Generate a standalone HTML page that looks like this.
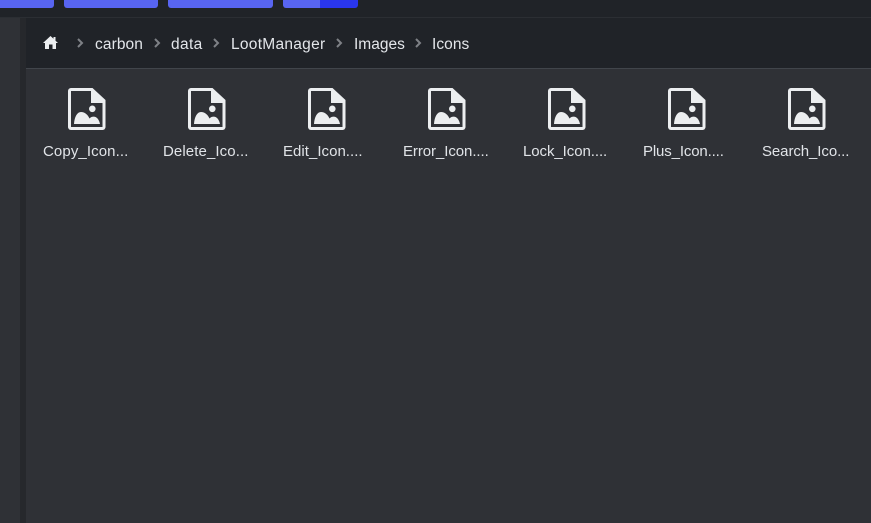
<!DOCTYPE html>
<html>
<head>
<meta charset="utf-8">
<style>
html,body{margin:0;padding:0;background:#2f3136;}
#root{position:relative;width:871px;height:523px;overflow:hidden;background:#2f3136;font-family:"Liberation Sans",sans-serif;color:#e3e6ea;}
.a{position:absolute;}
.btn{position:absolute;top:-6px;height:14px;background:#5865f2;border-radius:3px;}
.t{position:absolute;font-size:15.5px;line-height:20px;white-space:nowrap;top:35px;}
.c{position:absolute;top:38px;}
.ic{position:absolute;top:88px;}
.l{position:absolute;top:142px;font-size:15px;line-height:20px;white-space:nowrap;color:#e1e4e8;}
</style>
</head>
<body>
<div id="root">
<svg width="0" height="0" style="position:absolute">
<defs>
<symbol id="f" viewBox="0 0 38 42">
<path d="M3 0H24.500L37.500 12V39a3 3 0 0 1-3 3H3a3 3 0 0 1-3-3V3a3 3 0 0 1 3-3Z" fill="#eceef0"/>
<path d="M3 3H23V15H34.500V39H3Z" fill="#2f3136"/>
<path d="M6 36C6.500 29 9 24 13 24C17 24 20 27 21.500 30.500C23 29 24.500 28.500 26.500 28.700C29.500 29 31.500 33 32 36Z" fill="#eceef0"/>
<circle cx="24.300" cy="20.800" r="3.300" fill="#eceef0"/>
</symbol>
<symbol id="ch" viewBox="0 0 8 10">
<path d="M2 1L6 5L2 9" fill="none" stroke="#7e8186" stroke-width="2"/>
</symbol>
</defs>
</svg>

<div class="a" style="left:0;top:0;width:871px;height:17px;background:#202328;"></div>
<div class="a" style="left:0;top:17px;width:871px;height:1px;background:#2b2e33;"></div>
<div class="btn" style="left:-10px;width:64px;"></div>
<div class="btn" style="left:64px;width:94px;"></div>
<div class="btn" style="left:168px;width:105px;"></div>
<div class="btn" style="left:283px;width:75px;background:linear-gradient(90deg,#5865f2 0,#5865f2 37px,#2a36ee 37px);"></div>

<div class="a" style="left:0;top:18px;width:20px;height:505px;background:#2f3136;"></div>
<div class="a" style="left:20px;top:18px;width:6px;height:505px;background:#26282c;"></div>
<div class="a" style="left:26px;top:18px;width:845px;height:50px;background:#202328;"></div>
<div class="a" style="left:26px;top:68px;width:845px;height:1px;background:#41454b;"></div>

<svg class="a" style="left:43px;top:36px" width="15" height="13" viewBox="0 0 15 13">
<path d="M7.500 0L0 7H2V13H6V8.500H9.500V13H13V7H15L12.500 4.700V1H10.500V2.800Z" fill="#eceef0"/>
</svg>

<svg class="c" style="left:76px" width="8" height="10"><use href="#ch"/></svg>
<div class="t" style="left:95px;letter-spacing:.1px;">carbon</div>
<svg class="c" style="left:153px" width="8" height="10"><use href="#ch"/></svg>
<div class="t" style="left:171px;letter-spacing:.35px;">data</div>
<svg class="c" style="left:212px" width="8" height="10"><use href="#ch"/></svg>
<div class="t" style="left:231px;letter-spacing:.28px;">LootManager</div>
<svg class="c" style="left:335px" width="8" height="10"><use href="#ch"/></svg>
<div class="t" style="left:354px;">Images</div>
<svg class="c" style="left:414px" width="8" height="10"><use href="#ch"/></svg>
<div class="t" style="left:432px;letter-spacing:.05px;">Icons</div>

<svg class="ic" style="left:68px" width="38" height="42"><use href="#f"/></svg>
<svg class="ic" style="left:188px" width="38" height="42"><use href="#f"/></svg>
<svg class="ic" style="left:308px" width="38" height="42"><use href="#f"/></svg>
<svg class="ic" style="left:428px" width="38" height="42"><use href="#f"/></svg>
<svg class="ic" style="left:548px" width="38" height="42"><use href="#f"/></svg>
<svg class="ic" style="left:668px" width="38" height="42"><use href="#f"/></svg>
<svg class="ic" style="left:788px" width="38" height="42"><use href="#f"/></svg>

<div class="l" style="left:43px;letter-spacing:.1px;">Copy_Icon...</div>
<div class="l" style="left:163px;letter-spacing:.1px;">Delete_Ico...</div>
<div class="l" style="left:283px;letter-spacing:.03px;">Edit_Icon....</div>
<div class="l" style="left:403px;letter-spacing:-.07px;">Error_Icon....</div>
<div class="l" style="left:523px;letter-spacing:-.07px;">Lock_Icon....</div>
<div class="l" style="left:643px;letter-spacing:-.14px;">Plus_Icon....</div>
<div class="l" style="left:762px;letter-spacing:-.08px;">Search_Ico...</div>
</div>
</body>
</html>
